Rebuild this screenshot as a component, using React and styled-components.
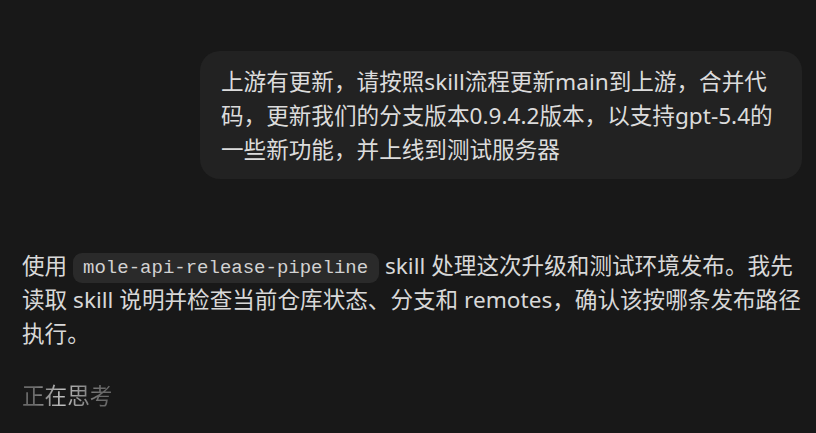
import styled, { createGlobalStyle } from 'styled-components';

// 全体
const GlobalStyle = createGlobalStyle`
  html, body {
    margin: 0;
    padding: 0;
    background: #181818;
  }
  body {
    font-family: "Noto Sans", "Noto Sans CJK SC", sans-serif;
    color: #dcdcdc;
  }
`;

const Thread = styled.main`
  min-height: 433px;
  box-sizing: border-box;
  padding: 51px 14px 0 22px;
  display: flex;
  flex-direction: column;
  font-size: 22.6px;
`;

const UserRow = styled.div`
  display: flex;
  justify-content: flex-end;
`;

const Bubble = styled.div`
  box-sizing: border-box;
  width: 602px;
  padding: 14px 20px 12px 21px;
  background: #222222;
  border-radius: 20px;
  line-height: 34px;
  color: #dcdcdc;
`;

const Answer = styled.p`
  margin: 70px 0 0;
  line-height: 33.5px;
  color: #d8d8d8;
`;

const Code = styled.code`
  display: inline-block;
  font-family: "Liberation Mono", "DejaVu Sans Mono", monospace;
  font-size: 19px;
  line-height: 30px;
  padding: 0 11px 0 10px;
  background: #2a2a2a;
  border-radius: 9px;
  color: #d2d2d2;
  vertical-align: 1px;
`;

const Thinking = styled.div`
  margin-top: 29px;
  align-self: flex-start;
  line-height: 34px;
  background: linear-gradient(90deg, #686868 0%, #6c6c6c 14%, #c0c0c0 45%, #8c8c8c 68%, #686868 88%);
  -webkit-background-clip: text;
  background-clip: text;
  color: transparent;
`;

const App = () => {
  return (
    <>
      <GlobalStyle />
      <Thread>
        <UserRow>
          <Bubble>
            上游有更新，请按照skill流程更新main到上游，合并代码，更新我们的分支版本0.9.4.2版本，以支持gpt-5.4的一些新功能，并上线到测试服务器
          </Bubble>
        </UserRow>
        <Answer>
          使用 <Code>mole-api-release-pipeline</Code> skill 处理这次升级和测试环境发布。我先读取 skill 说明并检查当前仓库状态、分支和 remotes，确认该按哪条发布路径执行。
        </Answer>
        <Thinking>正在思考</Thinking>
      </Thread>
    </>
  );
};

export default App;
